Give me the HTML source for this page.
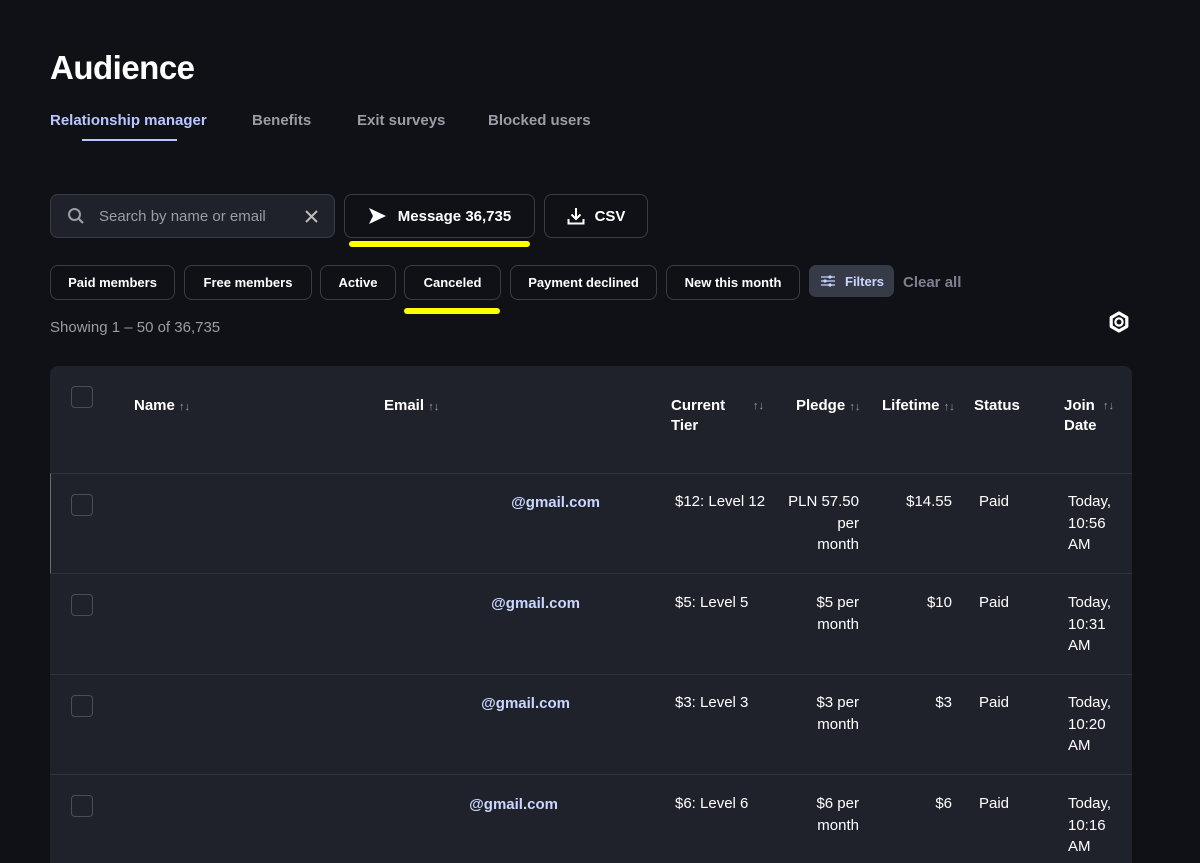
<!DOCTYPE html>
<html><head><meta charset="utf-8"><style>
*{margin:0;padding:0;box-sizing:border-box}
html,body{width:1200px;height:863px;overflow:hidden}
body{background:#101116;color:#fff;font-family:"Liberation Sans",sans-serif;position:relative}
.a{position:absolute}
h1{position:absolute;left:50px;top:49px;font-size:33px;font-weight:700;letter-spacing:-0.5px}
.tab{position:absolute;top:112px;font-size:15px;font-weight:700;color:#9a9ca6}
.btn{position:absolute;border:1px solid #3a3d45;border-radius:8px;background:#101116;font-weight:700;font-size:15px;display:flex;align-items:center;justify-content:center}
.chip{position:absolute;top:265px;height:35px;border:1px solid #3a3d45;border-radius:8px;font-size:13px;font-weight:700;display:flex;align-items:center;justify-content:center}
.yl{position:absolute;height:6px;background:#ffff00;border-radius:3px}
.table{position:absolute;left:50px;top:366px;width:1082px;height:520px;background:#1f222a;border-radius:8px}
.row{position:absolute;left:50px;width:1082px;border-top:1px solid #30333b}
.cb{position:absolute;width:22px;height:22px;border:1.5px solid #4a4d56;border-radius:4px}
.t{position:absolute;font-size:15px;line-height:21.5px;color:#fff}
.h{position:absolute;font-size:15px;font-weight:700;line-height:20px}
.s{color:#9a9ca6;font-size:11px;font-weight:700}
.em{color:#c9d7ff;font-weight:700}
</style></head><body>
<h1>Audience</h1>
<div class="tab" style="left:50px;color:#b8c8ff">Relationship manager</div>
<div class="a" style="left:82px;top:139px;width:95px;height:2px;background:#b8c8ff"></div>
<div class="tab" style="left:252px">Benefits</div>
<div class="tab" style="left:357px">Exit surveys</div>
<div class="tab" style="left:488px">Blocked users</div>

<div class="btn" style="left:50px;top:194px;width:285px;height:44px;background:#1f222a;justify-content:flex-start;font-weight:400;color:#9a9ca6">
<svg style="margin:0 14px 0 16px" width="18" height="18" viewBox="0 0 18 18"><circle cx="7.5" cy="7.5" r="5.5" fill="none" stroke="#9a9ca6" stroke-width="2"/><path d="M11.5 11.5L16 16" stroke="#9a9ca6" stroke-width="2.2"/></svg>Search by name or email
<svg style="position:absolute;right:16px" width="13" height="13" viewBox="0 0 13 13"><path d="M1 1L12 12M12 1L1 12" stroke="#bbb" stroke-width="2"/></svg></div>
<div class="btn" style="left:344px;top:194px;width:191px;height:44px"><svg width="18" height="16" viewBox="0 0 18 16" style="margin-right:12px"><path d="M1 0L18 8L1 16L5 8Z" fill="#fff"/></svg>Message 36,735</div>
<div class="yl" style="left:349px;top:241px;width:181px"></div>
<div class="btn" style="left:544px;top:194px;width:104px;height:44px"><svg width="18" height="18" viewBox="0 0 18 18" style="margin-right:10px"><path d="M9 1V12M4.5 7.5L9 12L13.5 7.5M1.5 12V16.5H16.5V12" fill="none" stroke="#fff" stroke-width="2"/></svg>CSV</div>

<div class="chip" style="left:50px;width:125px">Paid members</div>
<div class="chip" style="left:184px;width:128px">Free members</div>
<div class="chip" style="left:320px;width:76px">Active</div>
<div class="chip" style="left:404px;width:97px">Canceled</div>
<div class="yl" style="left:404px;top:308px;width:96px"></div>
<div class="chip" style="left:510px;width:147px">Payment declined</div>
<div class="chip" style="left:666px;width:134px">New this month</div>
<div class="a" style="left:809px;top:265px;width:85px;height:32px;background:#373b48;border-radius:7px;font-size:13px;font-weight:700;color:#c9d7ff;display:flex;align-items:center;padding-left:12px"><svg width="14" height="12" viewBox="0 0 14 12" style="margin-right:10px"><path d="M0 2H14M0 6H14M0 10H14" stroke="#c9d7ff" stroke-width="1.2"/><circle cx="9" cy="2" r="1.6" fill="#c9d7ff"/><circle cx="4" cy="6" r="1.6" fill="#c9d7ff"/><circle cx="9" cy="10" r="1.6" fill="#c9d7ff"/></svg>Filters</div>
<div class="a" style="left:903px;top:274px;font-size:15px;font-weight:700;color:#7d8090">Clear all</div>
<div class="a" style="left:50px;top:319px;font-size:15px;color:#9a9ca6">Showing 1 – 50 of 36,735</div>
<svg class="a" style="left:1108px;top:311px" width="22" height="22" viewBox="0 0 22 22"><path d="M11 2L18.8 6.5V15.5L11 20L3.2 15.5V6.5Z" fill="none" stroke="#fff" stroke-width="3.2" stroke-linejoin="round"/><circle cx="11" cy="11" r="3.6" fill="none" stroke="#fff" stroke-width="2.2"/></svg>

<div class="table"></div>
<div class="cb" style="left:71px;top:386px"></div>
<div class="h" style="left:134px;top:396px">Name <span class="s">↑↓</span></div>
<div class="h" style="left:384px;top:396px">Email <span class="s">↑↓</span></div>
<div class="h" style="left:671px;top:396px">Current<br>Tier</div><div class="h s" style="left:753px;top:396px">↑↓</div>
<div class="h" style="left:796px;top:396px">Pledge <span class="s">↑↓</span></div>
<div class="h" style="left:882px;top:396px">Lifetime <span class="s">↑↓</span></div>
<div class="h" style="left:974px;top:396px">Status</div>
<div class="h" style="left:1064px;top:396px">Join<br>Date</div><div class="h s" style="left:1103px;top:396px">↑↓</div>

<div class="row" style="top:473px;height:101px;border-left:1px solid #6a6d76"></div>
<div class="row" style="top:573px;height:101px"></div>
<div class="row" style="top:674px;height:101px"></div>
<div class="row" style="top:774px;height:101px"></div>

<div class="cb" style="left:71px;top:494px"></div>
<div class="t em" style="right:600px;top:492px">@gmail.com</div>
<div class="t" style="left:675px;top:491px">$12: Level 12</div>
<div class="t" style="right:341px;top:491px;text-align:right">PLN 57.50<br>per<br>month</div>
<div class="t" style="right:248px;top:491px">$14.55</div>
<div class="t" style="left:979px;top:491px">Paid</div>
<div class="t" style="left:1068px;top:491px">Today,<br>10:56<br>AM</div>

<div class="cb" style="left:71px;top:594px"></div>
<div class="t em" style="right:620px;top:593px">@gmail.com</div>
<div class="t" style="left:675px;top:592px">$5: Level 5</div>
<div class="t" style="right:341px;top:592px;text-align:right">$5 per<br>month</div>
<div class="t" style="right:248px;top:592px">$10</div>
<div class="t" style="left:979px;top:592px">Paid</div>
<div class="t" style="left:1068px;top:592px">Today,<br>10:31<br>AM</div>

<div class="cb" style="left:71px;top:695px"></div>
<div class="t em" style="right:630px;top:693px">@gmail.com</div>
<div class="t" style="left:675px;top:692px">$3: Level 3</div>
<div class="t" style="right:341px;top:692px;text-align:right">$3 per<br>month</div>
<div class="t" style="right:248px;top:692px">$3</div>
<div class="t" style="left:979px;top:692px">Paid</div>
<div class="t" style="left:1068px;top:692px">Today,<br>10:20<br>AM</div>

<div class="cb" style="left:71px;top:795px"></div>
<div class="t em" style="right:642px;top:794px">@gmail.com</div>
<div class="t" style="left:675px;top:793px">$6: Level 6</div>
<div class="t" style="right:341px;top:793px;text-align:right">$6 per<br>month</div>
<div class="t" style="right:248px;top:793px">$6</div>
<div class="t" style="left:979px;top:793px">Paid</div>
<div class="t" style="left:1068px;top:793px">Today,<br>10:16<br>AM</div>
</body></html>
